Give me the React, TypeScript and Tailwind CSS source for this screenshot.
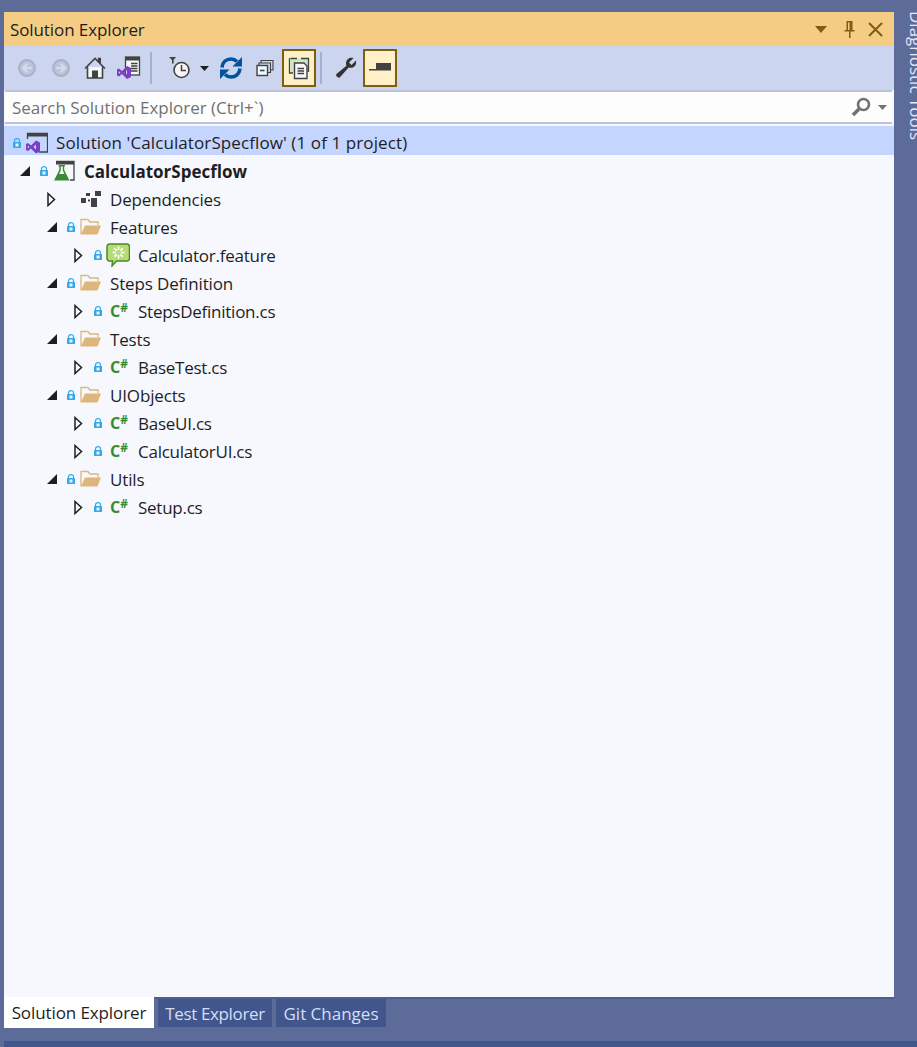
import type { ReactNode } from 'react'

const FONT = "font-['Open_Sans','Noto_Sans',sans-serif]"

function Back({ flip = false }: { flip?: boolean }) {
  return (
    <svg width="20" height="20" viewBox="0 0 20 20" className={flip ? 'scale-x-[-1]' : ''}>
      <circle cx="10" cy="10" r="8" fill="#bcc3d8" stroke="#aab1c6" strokeWidth="2" />
      <path d="M10.500 5.500 6 10l4.500 4.500M6.500 10H15" stroke="#d3daee" strokeWidth="2.400" fill="none" />
    </svg>
  )
}

function Home() {
  return (
    <svg width="22" height="22" viewBox="0 0 22 22">
      <path d="M1 11.500 11 1.500l3.600 3.600V1.500h1.600v5.200l4.800 4.800" stroke="#424242" strokeWidth="1.600" fill="none" />
      <path d="M3.500 10V21h15V10" stroke="#424242" strokeWidth="1.600" fill="#f6f6f6" />
      <rect x="8" y="13.500" width="6" height="7.500" fill="#424242" />
    </svg>
  )
}

function VsLogo({ size = 14 }: { size?: number }) {
  return (
    <svg width={size} height={size} viewBox="0 0 14 14" x="0" y="0">
      <path d="M10 .5 14 2.500v9L10 13.500 5 8.500 2 11 0 10V4L2 3 5 5.500Zm0 4L7.400 7 10 9.500ZM1.800 5.500v3L3.400 7Z" fill="#7b3fc6" />
    </svg>
  )
}

function VsSolutionTool() {
  return (
    <svg width="24" height="24" viewBox="0 0 24 24">
      <rect x="8.500" y="1" width="14" height="18" fill="#f6f6f6" stroke="#424242" strokeWidth="1.300" />
      <rect x="8.500" y="1" width="14" height="3.500" fill="#424242" />
      <path d="M14 7.500h6.500M14 10h6.500M14 12.500h6.500M14 15h6.500" stroke="#424242" strokeWidth="1.300" />
      <g transform="translate(0 9.500)">
        <VsLogo />
      </g>
    </svg>
  )
}

function History() {
  return (
    <svg width="24" height="26" viewBox="0 0 24 26">
      <path d="M1 2h7L5.600 5v3.500H4V5Z" fill="#424242" />
      <circle cx="13.500" cy="15" r="7.500" fill="#f6f6f6" stroke="#424242" strokeWidth="1.600" />
      <path d="M13.500 10v5.500h4.500" stroke="#424242" strokeWidth="1.500" fill="none" />
    </svg>
  )
}

function Sync() {
  return (
    <svg width="24" height="24" viewBox="0 0 24 24">
      <path d="M3 11.500C3.500 6 7.500 3 12 3c2.500 0 4.500 1 6 2.500" stroke="#00539c" strokeWidth="3.600" fill="none" />
      <path d="M23 1v9.500h-9.500Z" fill="#00539c" />
      <path d="M21 12.500c-.5 5.500-4.500 8.500-9 8.500-2.500 0-4.500-1-6-2.500" stroke="#00539c" strokeWidth="3.600" fill="none" />
      <path d="M1 23v-9.500h9.500Z" fill="#00539c" />
    </svg>
  )
}

function Collapse() {
  return (
    <svg width="18" height="18" viewBox="0 0 18 18">
      <path d="M5 4V1.500h12V11h-2.500M3 6.500V4h11.500v9.500H12" stroke="#424242" strokeWidth="1.100" fill="none" />
      <rect x="1" y="6.500" width="10.500" height="10" fill="#f6f6f6" stroke="#424242" strokeWidth="1.400" />
      <path d="M4 11.500h4.500" stroke="#00539c" strokeWidth="1.600" />
    </svg>
  )
}

function PendingChanges() {
  return (
    <svg width="24" height="24" viewBox="0 0 24 24">
      <path d="M9 3H2.500v14H6" fill="#cfe8c4" stroke="#424242" strokeWidth="1.300" />
      <path d="M3 2.500h18.500V16H3Z" fill="#cfe8c4" />
      <path d="M3.500 2.500H10M14 2.500h7.500V16" stroke="#424242" strokeWidth="1.300" fill="none" />
      <path d="M7.500 7h9.500l3 3v12.500H7.500Z" fill="#f6f6f6" stroke="#424242" strokeWidth="1.400" />
      <path d="M10.500 12.500h6.500M10.500 15h6.500M10.500 17.500h6.500" stroke="#424242" strokeWidth="1.300" />
    </svg>
  )
}

function Wrench() {
  return (
    <svg width="22" height="22" viewBox="0 0 22 22">
      <path d="M21 3.500 16.500 8 14 5.500 18.500 1C15 0 11 2 11 6.500c0 1 .2 1.500.4 2.200L1.500 17c-1.500 1.500 1.800 4.800 3.500 3.300l8.700-9.800c.7.200 1.300.3 2.200.3 3.500 0 6-3.300 5.100-7.300Z" fill="#333" />
    </svg>
  )
}

function Preview() {
  return (
    <svg width="22" height="10" viewBox="0 0 22 10">
      <rect x="7" y="0" width="15" height="6" fill="#424242" />
      <rect x="0" y="6" width="22" height="1.500" fill="#424242" />
    </svg>
  )
}

function Lock() {
  return (
    <svg width="8" height="10" viewBox="0 0 8 10" className="shrink-0">
      <path d="M1.500 4.500V2.700C1.500 1.400 2.600.7 4 .7s2.500.7 2.500 2V4.500" stroke="#35a9ea" strokeWidth="1.200" fill="none" />
      <rect x="0" y="4" width="8" height="6" rx="0.500" fill="#35a9ea" />
      <rect x="2.500" y="5.500" width="3" height="3" fill="#e4f2fd" />
    </svg>
  )
}

function Folder() {
  return (
    <svg width="22" height="18" viewBox="0 0 22 18">
      <path d="M1 16.500V1.500h7l2 2.500h8v3" fill="#f6f8fe" stroke="#dcb67a" strokeWidth="1.300" />
      <path d="M1 16.500 5 7.500h16l-3.500 9Z" fill="#dcb67a" />
    </svg>
  )
}

function Deps() {
  return (
    <svg width="22" height="18" viewBox="0 0 22 18">
      <rect x="1" y="8" width="5" height="5" fill="#424242" />
      <rect x="6" y="3" width="4" height="3" fill="#424242" />
      <rect x="11" y="8" width="6" height="9" fill="#424242" />
      <rect x="15" y="1" width="6" height="5" fill="#424242" />
      <rect x="8" y="9.500" width="2" height="2" fill="#424242" />
    </svg>
  )
}

function SolutionIcon() {
  return (
    <svg width="22" height="22" viewBox="0 0 22 22">
      <path d="M1.500 7V1.500h20V20H13" stroke="#424242" strokeWidth="1.300" fill="none" />
      <rect x="1.500" y="1" width="20" height="3.500" fill="#424242" />
      <g transform="translate(0 8)">
        <VsLogo />
      </g>
    </svg>
  )
}

function ProjectIcon() {
  return (
    <svg width="22" height="22" viewBox="0 0 22 22">
      <path d="M3 1.500h18V20h-4" stroke="#424242" strokeWidth="1.300" fill="none" />
      <rect x="3" y="1" width="18" height="3.500" fill="#424242" />
      <path d="M5.500 5h6.500v1.200h-.8V10l5.300 10.500H1L6.300 10V6.200h-.8Z" fill="#388a34" />
      <path d="M7.800 6.500h2v4l1.700 3.500H6.100l1.700-3.500Z" fill="#f6f8fe" />
    </svg>
  )
}

function FeatureIcon() {
  return (
    <svg width="24" height="24" viewBox="0 0 24 24">
      <path d="M3.500 1h17.500a2.500 2.500 0 0 1 2.500 2.500v12a2.500 2.500 0 0 1-2.500 2.500H10.500l-4.500 5 .5-5H3.500A2.500 2.500 0 0 1 1 15.500v-12A2.500 2.500 0 0 1 3.500 1Z" fill="#b6dc78" stroke="#4b8a1e" strokeWidth="1.500" />
      <path d="M12.500 3.500v3.500M12.500 12v3.500M6.500 9.500h3.500M15 9.500h3.500M8.300 5.300l2.400 2.400M14.300 11.300l2.400 2.400M16.700 5.300l-2.400 2.400M10.700 11.300l-2.400 2.400" stroke="#fff" strokeWidth="1.700" />
    </svg>
  )
}

function CSharp() {
  return (
    <span className="ml-[3px] flex items-start font-bold tracking-normal text-[#388a34]">
      <span className="text-[16px] leading-none">C</span>
      <span className="-mt-px text-[12px] leading-none">#</span>
    </span>
  )
}

function Arrow({ open }: { open?: boolean }) {
  if (open) {
    return (
      <svg width="10" height="10" viewBox="0 0 10 10">
        <path d="M10 0v10H0Z" fill="#1e1e1e" />
      </svg>
    )
  }
  return (
    <svg width="9" height="15" viewBox="0 0 9 15">
      <path d="M1 1.500 7.500 7.500 1 13.500Z" fill="#f6f8fe" stroke="#1e1e1e" strokeWidth="1.500" />
    </svg>
  )
}

function TreeRow({
  level,
  arrow,
  lock = true,
  icon,
  label,
  bold = false,
}: {
  level: 1 | 2 | 3
  arrow: ReactNode
  lock?: boolean
  icon: ReactNode
  label: string
  bold?: boolean
}) {
  const indent = level === 1 ? 'pl-[16px]' : level === 2 ? 'pl-[43px] tracking-[-0.15px]' : 'pl-[70px] tracking-[-0.25px]'
  const iconWidth = level === 2 ? 'w-[30px]' : 'w-[31px]'
  return (
    <div className={`flex h-7 items-center ${indent}`}>
      <div className="flex w-[20px] shrink-0 items-center">{arrow}</div>
      <div className="flex w-[13px] shrink-0 items-center">{lock && <Lock />}</div>
      <div className={`flex shrink-0 items-center ${iconWidth}`}>{icon}</div>
      <span className={bold ? 'font-bold' : ''}>{label}</span>
    </div>
  )
}

const PressedButton = ({ children }: { children: ReactNode }) => (
  <div className="flex h-[38px] w-[34px] items-center justify-center border-2 border-[#7f5f0f] bg-[#fff0c8]">{children}</div>
)

const ToolButton = ({ children }: { children: ReactNode }) => (
  <div className="flex h-[38px] w-[34px] items-center justify-center">{children}</div>
)

const Separator = ({ className }: { className: string }) => <div className={`h-[32px] w-[2px] bg-[#a3b1d6] ${className}`} />

export default function App() {
  return (
    <div className={`flex h-[1047px] w-[917px] flex-col overflow-hidden bg-[#5d6b99] text-[17px] leading-none text-[#1e1e1e] ${FONT}`}>
      <div className="flex h-[997px] pt-3 pl-1">
        <div className="flex w-[890px] shrink-0 flex-col bg-[#f6f8fe]">
          <div className="flex h-[34px] items-center justify-between bg-[#f5cc84] pr-[11px] pl-[6px]">
            <span className="tracking-[-0.1px]">Solution Explorer</span>
            <div className="flex items-center">
              <svg width="12" height="7" viewBox="0 0 12 7">
                <path d="M0 0h12L6 7Z" fill="#7f5f0f" />
              </svg>
              <svg width="11" height="18" viewBox="0 0 11 18" className="ml-[17px]">
                <path d="M2.500 1h6v9h2v1.500h-4V18H5v-6.500H.5V10h2Zm1.500 1.500V10h1.500V2.500Z" fill="#7f5f0f" />
              </svg>
              <svg width="15" height="15" viewBox="0 0 15 15" className="ml-[13px]">
                <path d="M1 1l13 13M14 1 1 14" stroke="#7f5f0f" strokeWidth="2" />
              </svg>
            </div>
          </div>

          <div className="flex h-[44px] items-center bg-[#ccd5f0] pl-[6px]">
            <ToolButton><Back /></ToolButton>
            <ToolButton><Back flip /></ToolButton>
            <ToolButton><Home /></ToolButton>
            <ToolButton><VsSolutionTool /></ToolButton>
            <Separator className="ml-1" />
            <div className="ml-[11px]"><ToolButton><History /></ToolButton></div>
            <div className="flex w-[14px] justify-center">
              <svg width="9" height="5" viewBox="0 0 9 5">
                <path d="M0 0h9L4.500 5Z" fill="#1e1e1e" />
              </svg>
            </div>
            <div className="ml-[3px]"><ToolButton><Sync /></ToolButton></div>
            <ToolButton><Collapse /></ToolButton>
            <PressedButton><PendingChanges /></PressedButton>
            <Separator className="ml-1" />
            <div className="ml-[7px]"><ToolButton><Wrench /></ToolButton></div>
            <PressedButton><Preview /></PressedButton>
          </div>

          <div className="mr-[2px] ml-[1px] flex h-[34px] items-center justify-between border-y-2 border-[#bcc3d6] bg-[#fdfdfd] pr-[5px] pl-[7px]">
            <span className="text-[#717171]">Search Solution Explorer (Ctrl+`)</span>
            <div className="flex items-center gap-[7px]">
              <svg width="20" height="20" viewBox="0 0 20 20">
                <circle cx="12.500" cy="7.500" r="5.500" fill="none" stroke="#717171" strokeWidth="2.600" />
                <path d="M8 12 2 18" stroke="#717171" strokeWidth="3.500" />
              </svg>
              <svg width="9" height="5" viewBox="0 0 9 5">
                <path d="M0 0h9L4.500 5Z" fill="#717171" />
              </svg>
            </div>
          </div>

          <div className="mt-[2px] flex h-[29px] items-center bg-[#c4d5ff] pt-1 pl-[9px]">
            <div className="flex w-[13px] shrink-0 items-center"><Lock /></div>
            <div className="flex w-[30px] shrink-0 items-center"><SolutionIcon /></div>
            <span className="tracking-[0.1px]">Solution 'CalculatorSpecflow' (1 of 1 project)</span>
          </div>

          <div className="pt-[2px]">
            <TreeRow level={1} arrow={<Arrow open />} icon={<ProjectIcon />} label="CalculatorSpecflow" bold />
            <TreeRow level={2} arrow={<Arrow />} lock={false} icon={<Deps />} label="Dependencies" />
            <TreeRow level={2} arrow={<Arrow open />} icon={<Folder />} label="Features" />
            <TreeRow level={3} arrow={<Arrow />} icon={<div className="-ml-px"><FeatureIcon /></div>} label="Calculator.feature" />
            <TreeRow level={2} arrow={<Arrow open />} icon={<Folder />} label="Steps Definition" />
            <TreeRow level={3} arrow={<Arrow />} icon={<CSharp />} label="StepsDefinition.cs" />
            <TreeRow level={2} arrow={<Arrow open />} icon={<Folder />} label="Tests" />
            <TreeRow level={3} arrow={<Arrow />} icon={<CSharp />} label="BaseTest.cs" />
            <TreeRow level={2} arrow={<Arrow open />} icon={<Folder />} label="UIObjects" />
            <TreeRow level={3} arrow={<Arrow />} icon={<CSharp />} label="BaseUI.cs" />
            <TreeRow level={3} arrow={<Arrow />} icon={<CSharp />} label="CalculatorUI.cs" />
            <TreeRow level={2} arrow={<Arrow open />} icon={<Folder />} label="Utils" />
            <TreeRow level={3} arrow={<Arrow />} icon={<CSharp />} label="Setup.cs" />
          </div>
        </div>
        <div className="pl-[14px]">
          <span className="-mt-px block w-[17px] text-[#e4e9f8] [writing-mode:vertical-rl]">Diagnostic Tools</span>
        </div>
      </div>

      <div className="flex h-[30px] items-start pl-1">
        <div className="flex h-[31px] w-[150px] shrink-0 items-center justify-center bg-white tracking-[-0.1px]">Solution Explorer</div>
        <div className="flex h-[30px] w-[740px] border-t-2 border-[#4d5f92] pl-1">
          <div className="flex h-[28px] w-[114px] items-center justify-center bg-[#40568d] tracking-[-0.35px] text-[#d6def5]">Test Explorer</div>
          <div className="ml-1 flex h-[28px] w-[110px] items-center justify-center bg-[#40568d] text-[#d6def5]">Git Changes</div>
        </div>
      </div>

      <div className="mt-[14px] ml-1 h-[6px] bg-[#40568d]" />
    </div>
  )
}
